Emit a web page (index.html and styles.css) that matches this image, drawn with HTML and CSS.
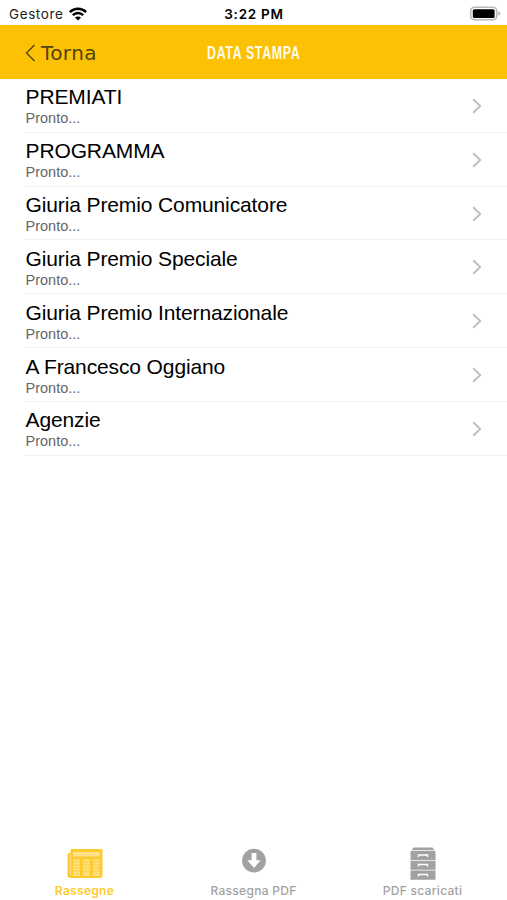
FILE: index.html
```html
<!DOCTYPE html>
<html lang="it">
<head>
  <meta charset="UTF-8">
  <meta name="viewport" content="width=device-width, initial-scale=1">
  <title>Data Stampa</title>
  <link rel="stylesheet" href="styles.css">
</head>
<body>

<div class="status">
  <div class="carrier">
    <span class="carrier-name">Gestore</span>
    <svg class="wifi" width="18" height="14" viewBox="0 0 18 14">
      <g fill="none" stroke="#000" stroke-width="2.5">
        <path d="M.8 5.1C5.4.5 12.6.5 17.2 5.1"/>
        <path d="M3.8 8.2C6.8 5.3 11.2 5.3 14.2 8.2"/>
      </g>
      <path d="M6 10.5C7.8 9 10.2 9 12 10.5L9 13.6Z"/>
    </svg>
  </div>
  <span class="time">3:22 PM</span>
  <svg class="battery" width="32" height="16" viewBox="0 0 32 16">
    <rect x="1.7" y="1.2" width="26" height="12.6" rx="3.8" fill="#fff" stroke="#b9b9b9" stroke-width="1.6"/>
    <rect x="3.8" y="3.3" width="21.8" height="8.6" rx="1.5"/>
    <path d="M29.4 5.2Q33 7.5 29.4 9.8Z" fill="#aaa"/>
  </svg>
</div>

<header class="navbar">
  <a href="#" class="back">
    <svg width="11" height="18" viewBox="0 0 11 18"><path d="M9.5 1L1.5 9L9.5 17" fill="none" stroke="#51420f" stroke-width="1.3"/></svg>
    <span>Torna</span>
  </a>
  <h1 class="title">DATA STAMPA</h1>
</header>

<main class="list">
  <a href="#" class="row">
    <div><div class="name">PREMIATI</div><div class="state">Pronto...</div></div>
    <svg class="chevron" viewBox="0 0 10 16"><path d="M1.2 1.2L8.2 8L1.2 14.8"/></svg>
  </a>
  <a href="#" class="row">
    <div><div class="name">PROGRAMMA</div><div class="state">Pronto...</div></div>
    <svg class="chevron" viewBox="0 0 10 16"><path d="M1.2 1.2L8.2 8L1.2 14.8"/></svg>
  </a>
  <a href="#" class="row">
    <div><div class="name">Giuria Premio Comunicatore</div><div class="state">Pronto...</div></div>
    <svg class="chevron" viewBox="0 0 10 16"><path d="M1.2 1.2L8.2 8L1.2 14.8"/></svg>
  </a>
  <a href="#" class="row">
    <div><div class="name">Giuria Premio Speciale</div><div class="state">Pronto...</div></div>
    <svg class="chevron" viewBox="0 0 10 16"><path d="M1.2 1.2L8.2 8L1.2 14.8"/></svg>
  </a>
  <a href="#" class="row">
    <div><div class="name">Giuria Premio Internazionale</div><div class="state">Pronto...</div></div>
    <svg class="chevron" viewBox="0 0 10 16"><path d="M1.2 1.2L8.2 8L1.2 14.8"/></svg>
  </a>
  <a href="#" class="row">
    <div><div class="name">A Francesco Oggiano</div><div class="state">Pronto...</div></div>
    <svg class="chevron" viewBox="0 0 10 16"><path d="M1.2 1.2L8.2 8L1.2 14.8"/></svg>
  </a>
  <a href="#" class="row">
    <div><div class="name">Agenzie</div><div class="state">Pronto...</div></div>
    <svg class="chevron" viewBox="0 0 10 16"><path d="M1.2 1.2L8.2 8L1.2 14.8"/></svg>
  </a>
</main>

<nav class="tabs">
  <a href="#" class="tab active">
    <!-- newspaper -->
    <svg width="36" height="32" viewBox="0 0 36 32">
      <path d="M3.5 6H2Q.5 6 .5 8V28Q.5 31 4 31H33Q35.5 31 35.5 29V3Q35.5 2 34.5 2H4.5Q3.5 2 3.5 3Z" fill="#fdcb2e"/>
      <rect x="6" y="5" width="26.5" height="4.5" fill="#fee18a"/>
      <g stroke="#fee18a" stroke-width="2">
        <path d="M6 13.5H13M6 16.5H13M6 19.5H13M6 22.5H13M6 25.5H13M6 28H13"/>
        <path d="M16 13.5H23M16 16.5H23M16 19.5H23M16 22.5H23M16 25.5H23M16 28H23"/>
        <path d="M26 13.5H32.5M26 16.5H32.5M26 19.5H32.5M26 22.5H32.5M26 25.5H32.5M26 28H32.5"/>
      </g>
      <path d="M3.5 7V28" stroke="#fee18a"/>
    </svg>
    <span>Rassegne</span>
  </a>
  <a href="#" class="tab">
    <svg width="24" height="30" viewBox="0 0 24 30">
      <circle cx="12" cy="13.7" r="11.9" fill="#a2a2a2"/>
      <path d="M9.6 6H14.4V13.2H18.6L12 21L5.4 13.2H9.6Z" fill="#fff"/>
    </svg>
    <span>Rassegna PDF</span>
  </a>
  <a href="#" class="tab">
    <!-- drawer cabinet -->
    <svg width="26" height="33" viewBox="0 0 26 33">
      <path d="M3.5 .5H22.5L24.5 3.3H1.5Z" fill="#a2a2a2"/>
      <path d="M.5 3.9H25.5V13H.5ZM.5 13.7H25.5V22.8H.5ZM.5 23.5H25.5V32.8H.5Z" fill="#a2a2a2"/>
      <path d="M8.5 10V8H17.5V10M8.5 19.5V17.5H17.5V19.5M8.5 29.5V27.5H17.5V29.5" fill="none" stroke="#fff" stroke-width="1.4"/>
    </svg>
    <span>PDF scaricati</span>
  </a>
</nav>

</body>
</html>
```
FILE: styles.css
```css
* { box-sizing: border-box; }
body {
  margin: 0;
  height: 100vh;
  display: flex;
  flex-direction: column;
  overflow: hidden;
  font-family: "Liberation Sans", Arial, sans-serif;
  background: #fff;
}

a {
  color: inherit;
  text-decoration: none;
}

svg {
  display: block;
  flex-shrink: 0;
}

.status {
  display: grid;
  grid-template-columns: 1fr auto 1fr;
  align-items: center;
  height: 25px;
  padding: 2px 6px 0 9px;
  font-family: Inter, sans-serif;
  font-size: 13.5px;
}

.carrier {
  display: flex;
  align-items: center;
  gap: 6px;
}

.carrier-name {
  color: #222;
  letter-spacing: 0.6px;
}

.time {
  margin-right: 2px;
  font-weight: 600;
  letter-spacing: 0.75px;
}

.battery { justify-self: end; }

.navbar {
  display: grid;
  grid-template-columns: 1fr auto 1fr;
  align-items: center;
  height: 54px;
  padding: 1px 25px 0;
  background: #fcc102;
}

.back {
  display: flex;
  align-items: center;
  gap: 5px;
  font-family: "DejaVu Sans", sans-serif;
  font-size: 20px;
  letter-spacing: 0.4px;
  color: #51420f;
}

.title {
  margin: 0 -30px;
  font-size: 18.5px;
  letter-spacing: 1px;
  color: #fffbed;
  transform: scaleX(0.67);
}

.list { flex: 1; }

.row {
  display: flex;
  justify-content: space-between;
  align-items: center;
  height: 53.83px;
  margin-left: 25px;
  padding: 1px 25px 0 0.5px;
  border-bottom: 1px solid #f0f0f0;
}

.name {
  padding-top: 1px;
  font-size: 21px;
  line-height: 24px;
  letter-spacing: -0.12px;
  color: #000;
}

.state {
  font-size: 14.5px;
  line-height: 18px;
  color: #666;
}

.chevron {
  width: 10px;
  height: 16px;
  fill: none;
  stroke: #c0c0c0;
  stroke-width: 2;
}

.tabs {
  display: grid;
  grid-template-columns: repeat(3, 1fr);
  height: 53px;
}

.tab {
  display: flex;
  flex-direction: column;
  align-items: center;
  justify-content: space-between;
  padding-bottom: 1px;
  font-family: Inter, sans-serif;
  font-size: 12px;
  font-weight: 500;
  line-height: 16px;
  letter-spacing: 0.3px;
  color: #a2a2a2;
}

.tab.active {
  font-weight: 600;
  color: #fdcb2e;
}
```
